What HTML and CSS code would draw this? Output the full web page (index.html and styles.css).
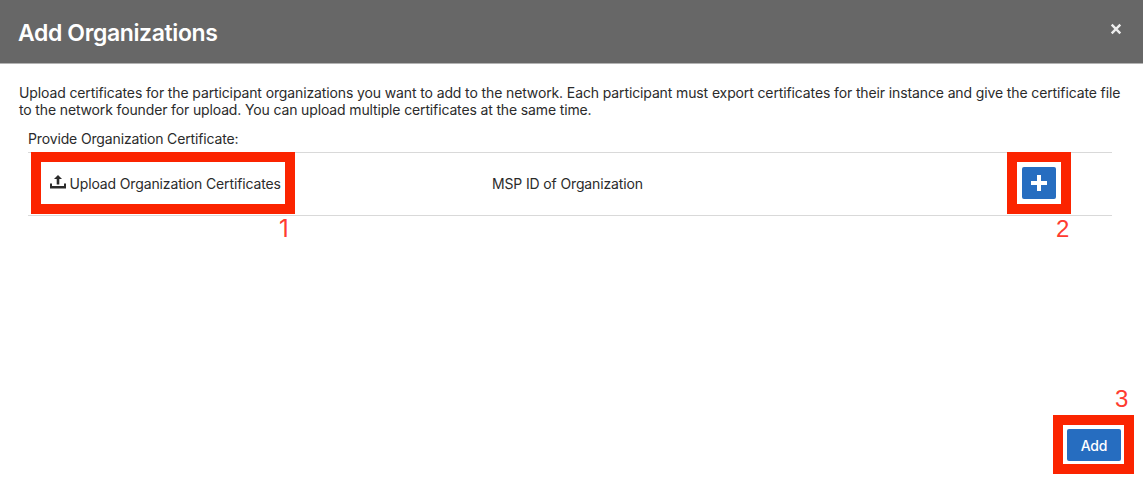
FILE: index.html
```html
<!DOCTYPE html>
<html lang="en">
<head>
<meta charset="utf-8">
<title>Add Organizations</title>
<link rel="stylesheet" href="styles.css">
</head>
<body>
<div class="dialog">
  <header class="dialog-header">
    <h1 class="title">Add Organizations</h1>
    <button class="close" aria-label="Close"><svg width="12" height="12" viewBox="0 0 12 12"><path d="M1.7 1.7L10.3 10.3M10.3 1.7L1.7 10.3"/></svg></button>
  </header>
  <main class="dialog-body">
    <p class="intro"><span class="line line-a">Upload certificates for the participant organizations you want to add to the network. Each participant must export certificates for their instance and give the certificate file</span> <span class="line line-b">to the network founder for upload. You can upload multiple certificates at the same time.</span></p>
    <div class="label"><span class="line">Provide Organization Certificate:</span></div>
    <div class="row">
      <div class="upload">
        <svg class="upload-icon" width="16" height="14" viewBox="0 0 16 14"><path d="M8 0L12 4H9.3V9.5H6.7V4H4Z M0 8.6H2V11H14V8.6H16V13.4H0Z"/></svg>
        <span class="line">Upload Organization Certificates</span>
        <span class="frame frame-upload"></span><span class="step step-1">1</span>
      </div>
      <div class="msp"><span class="line">MSP ID of Organization</span></div>
      <button class="plus" aria-label="Add row"><svg width="16" height="16" viewBox="0 0 16 16"><path d="M6 0H10V6H16V10H10V16H6V10H0V6H6Z"/></svg><span class="frame frame-plus"></span><span class="step step-2">2</span></button>
    </div>
  </main>
  <footer class="dialog-footer">
    <button class="add"><span class="line">Add</span><span class="frame frame-add"></span><span class="step step-3">3</span></button>
  </footer>
</div>
</body>
</html>
```
FILE: styles.css
```css
* { box-sizing: border-box; }
body { margin: 0; background: #fff; color: #2b2b2b; font: 14px/17px Inter, sans-serif; letter-spacing: -0.14px; }
.dialog { width: 1143px; height: 483px; display: flex; flex-direction: column; overflow: hidden; }
.dialog-header { height: 64px; flex: none; display: flex; justify-content: space-between; align-items: flex-start; padding: 19px 21px 0 18px; background: #676767; border-bottom: 1px solid #b3b3b3; }
.title { margin: 0; color: #fff; font-size: 23px; line-height: 28px; font-weight: 600; letter-spacing: -0.38px; }
button { border: 0; padding: 0; font: inherit; letter-spacing: inherit; }
.close { height: 12px; width: 12px; margin-top: 4px; background: none; display: flex; }
.close path { stroke: #eee; stroke-width: 2.4; }
.dialog-body { flex: 1; padding: 20px 19px 0; }
.intro { margin: 0; }
.line { display: inline-block; white-space: nowrap; }
.line-a { letter-spacing: -0.122px; }
.label { padding: 12px 0 5px 9px; height: 34px; }
.row { height: 64px; margin: 0 12px 0 9px; border: solid #d9d9d9; border-width: 1px 0; display: flex; align-items: center; }
.upload { position: relative; width: 464px; height: 18px; margin-bottom: 2px; padding-left: 22px; display: flex; align-items: center; }
.upload-icon { flex: none; margin: -3px 3.5px 0 0; fill: #2b2b2b; }
.msp { flex: 1; margin-bottom: 2px; }
.plus { position: relative; width: 34px; height: 32px; margin: 0 56px 2px 0; display: flex; align-items: center; justify-content: center; background: #266dc0; border-radius: 2px; }
.plus svg { fill: #fff; }
.dialog-footer { flex: none; display: flex; justify-content: flex-end; padding: 0 22px 22px; }
.add { position: relative; width: 54px; height: 32px; color: #fff; font-weight: 500; background: #266dc0; border-radius: 2px; }
.frame { position: absolute; border: 10px solid #fb2400; pointer-events: none; }
.frame-upload { left: 3px; top: -22px; width: 264px; height: 62px; }
.frame-plus { left: -15px; top: -15px; width: 64px; height: 62px; }
.frame-add { left: -14px; top: -14px; width: 81px; height: 59px; }
.step { position: absolute; color: #ff3b30; font: 24px/28px "Liberation Sans", Arial, sans-serif; letter-spacing: 0; }
.step-1 { left: 251px; top: 41px; font-family: Inter, sans-serif; }
.step-2 { left: 34px; top: 48px; }
.step-3 { left: 48px; top: -44px; }
```
